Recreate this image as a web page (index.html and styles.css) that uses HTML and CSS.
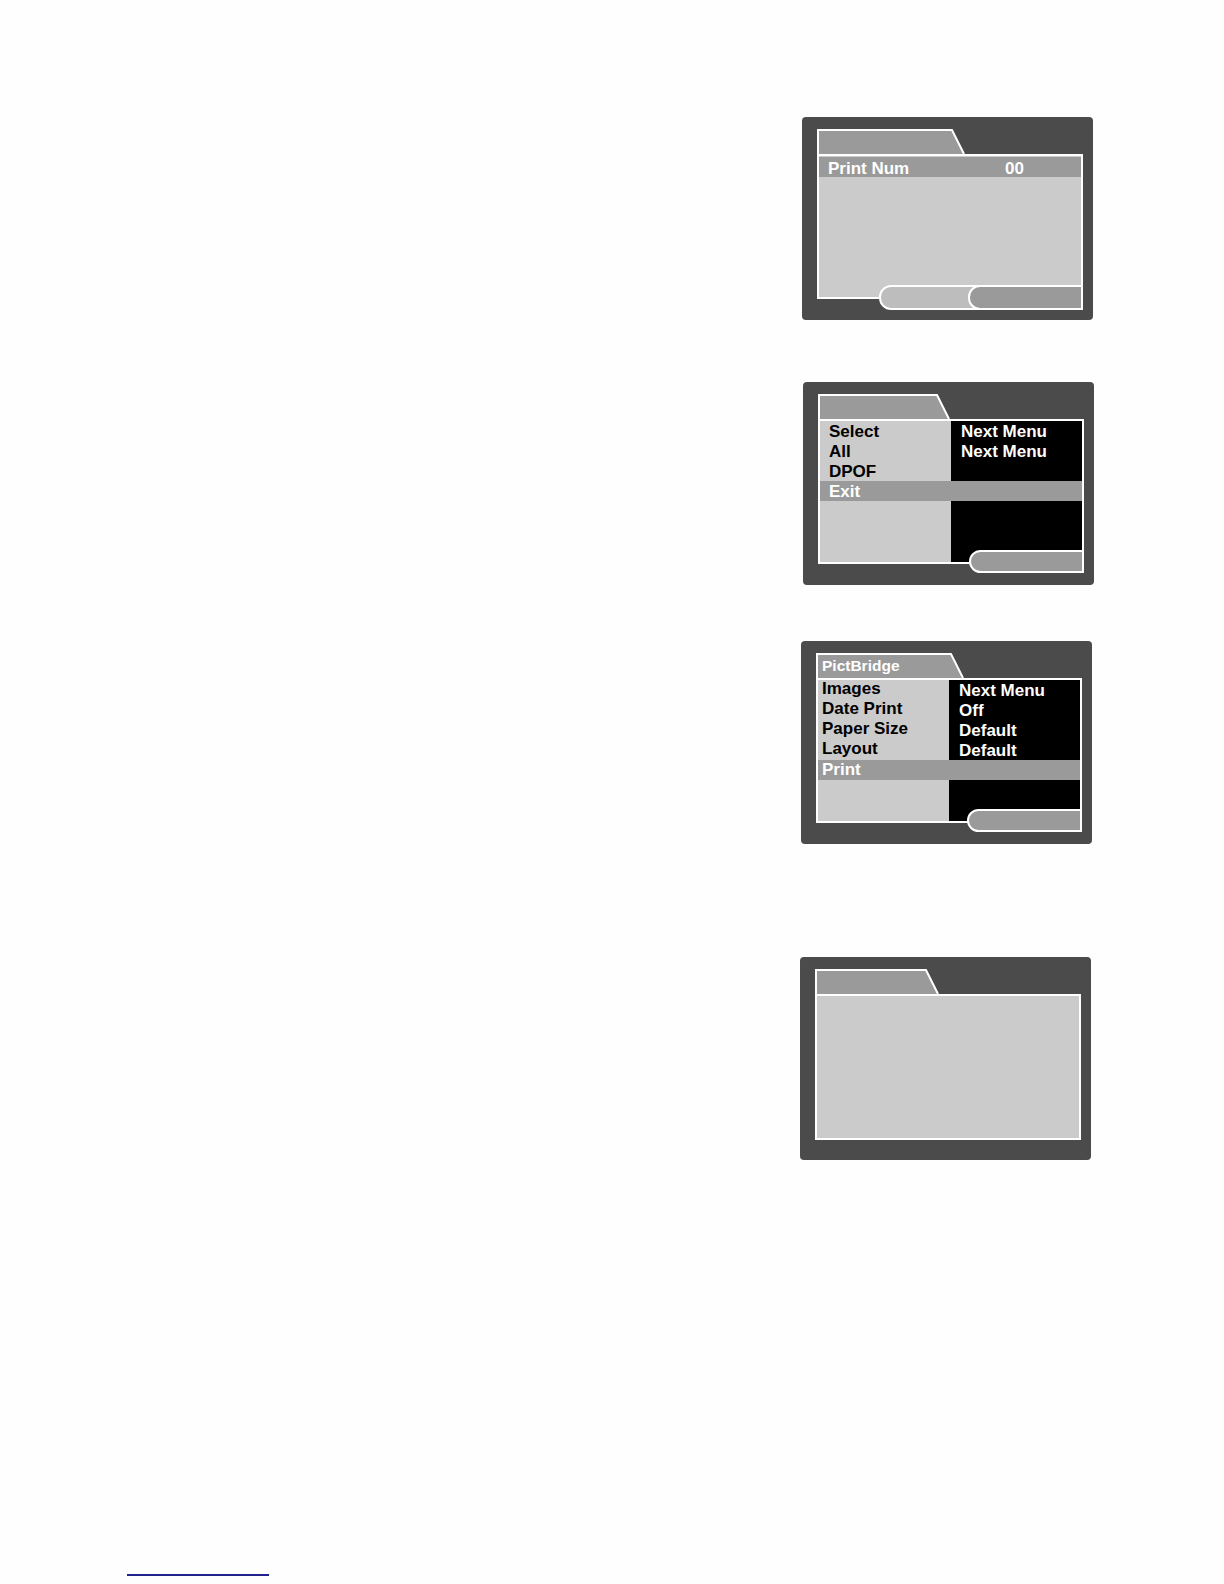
FILE: index.html
```html
<!DOCTYPE html>
<html lang="en">
<head>
<meta charset="utf-8">
<title>PictBridge menus</title>
<link rel="stylesheet" href="styles.css">
</head>
<body>
<div class="page">

  <div class="screen s1">
    <div class="tab tab-135">
      <svg class="tab-shape" width="150" height="25" viewBox="0 0 150 25"><path d="M1 25 V1 H135 L147 25 Z" fill="#9a9a9a"/><path d="M1 25 V1 H135 L147 25" fill="none" stroke="#fff" stroke-width="2"/></svg>
    </div>
    <div class="lcd lcd-plain">
      <div class="numrow"><span>Print Num</span><span>00</span></div>
      <div class="pill pill-light"></div>
      <div class="pill pill-main pill-tall"></div>
    </div>
  </div>

  <div class="screen s2">
    <div class="tab tab-119">
      <svg class="tab-shape" width="134" height="25" viewBox="0 0 134 25"><path d="M1 25 V1 H119 L131 25 Z" fill="#9a9a9a"/><path d="M1 25 V1 H119 L131 25" fill="none" stroke="#fff" stroke-width="2"/></svg>
    </div>
    <div class="lcd menu menu-wide">
      <div class="cell-l">Select</div><div class="cell-r">Next Menu</div>
      <div class="cell-l">All</div><div class="cell-r">Next Menu</div>
      <div class="cell-l">DPOF</div><div class="cell-r"></div>
      <div class="row-hi">Exit</div>
      <div class="pill pill-main"></div>
    </div>
  </div>

  <div class="screen s3">
    <div class="tab tab-135">
      <svg class="tab-shape" width="150" height="25" viewBox="0 0 150 25"><path d="M1 25 V1 H135 L147 25 Z" fill="#9a9a9a"/><path d="M1 25 V1 H135 L147 25" fill="none" stroke="#fff" stroke-width="2"/></svg>
      <span class="tab-label">PictBridge</span>
    </div>
    <div class="lcd menu menu-tight">
      <div class="cell-l">Images</div><div class="cell-r">Next Menu</div>
      <div class="cell-l">Date Print</div><div class="cell-r">Off</div>
      <div class="cell-l">Paper Size</div><div class="cell-r">Default</div>
      <div class="cell-l">Layout</div><div class="cell-r">Default</div>
      <div class="row-hi">Print</div>
      <div class="pill pill-main"></div>
    </div>
  </div>

  <div class="screen s4">
    <div class="tab tab-111">
      <svg class="tab-shape" width="126" height="25" viewBox="0 0 126 25"><path d="M1 25 V1 H111 L123 25 Z" fill="#9a9a9a"/><path d="M1 25 V1 H111 L123 25" fill="none" stroke="#fff" stroke-width="2"/></svg>
    </div>
    <div class="lcd lcd-plain"></div>
  </div>

  <div class="footline"></div>
</div>
</body>
</html>
```

FILE: styles.css
```css
html, body {
  margin: 0;
  padding: 0;
  background: #fefefe;
}

body {
  font-family: "Liberation Sans", Arial, sans-serif;
}

.page {
  display: flex;
  flex-direction: column;
  align-items: flex-start;
  padding-top: 117px;
  height: 1584px;
  box-sizing: border-box;
}

.screen {
  width: 291px;
  box-sizing: border-box;
  padding: 12px 10px 0 15px;
  background: #4b4b4b;
  border-radius: 4px;
  display: flex;
  flex-direction: column;
}

.s1 { margin-left: 802px; height: 203px; }
.s2 { margin-left: 803px; margin-top: 62px; height: 203px; }
.s3 { margin-left: 801px; margin-top: 56px; height: 203px; }
.s4 { margin-left: 800px; margin-top: 113px; height: 203px; }

.tab {
  position: relative;
  height: 25px;
}

.tab-135 { width: 150px; }
.tab-119 { width: 134px; }
.tab-111 { width: 126px; }

.tab-shape {
  position: absolute;
  left: 0;
  top: 0;
  display: block;
}

.tab-label {
  position: relative;
  display: block;
  padding: 1px 0 0 6px;
  line-height: 23px;
  color: #fff;
  font-weight: bold;
  font-size: 15.5px;
}

.lcd {
  position: relative;
  box-sizing: border-box;
  height: 145px;
  border: 2px solid #fff;
  background: #cbcbcb;
}

.s4 .lcd { height: 146px; }

.numrow {
  display: grid;
  grid-template-columns: 177px 1fr;
  box-sizing: border-box;
  padding: 2px 0 0 9px;
  margin-top: 1px;
  height: 20px;
  line-height: 19px;
  background: #9a9a9a;
  color: #fff;
  font-weight: bold;
  font-size: 17px;
}

.menu {
  display: grid;
  grid-template-columns: 131px 1fr;
  grid-auto-rows: 20px;
  align-content: start;
  background: linear-gradient(to right, #cbcbcb 131px, #000 131px);
  font-weight: bold;
  font-size: 17px;
  line-height: 20px;
}

.cell-l {
  color: #000;
  white-space: nowrap;
}

.cell-r {
  color: #fff;
  padding-left: 10px;
  white-space: nowrap;
}

.menu-wide .cell-l,
.menu-wide .row-hi { padding-left: 9px; }

.menu-wide .cell-l,
.menu-wide .cell-r,
.menu-wide .row-hi { padding-top: 1px; line-height: 19px; }

.menu-tight .cell-l,
.menu-tight .row-hi { padding-left: 4px; }

.menu-tight .cell-l { line-height: 18px; }

.menu-tight .cell-r { padding-top: 2px; line-height: 18px; }

.row-hi {
  grid-column: 1 / -1;
  background: #9a9a9a;
  color: #fff;
}

.pill {
  position: absolute;
  box-sizing: border-box;
  top: 129px;
  height: 23px;
  border: 2px solid #fff;
  border-radius: 12px 0 0 12px;
  background: #9a9a9a;
}

.pill-main {
  left: 149px;
  right: -2px;
}

.pill-tall {
  top: 129px;
  height: 25px;
}

.pill-light {
  left: 60px;
  width: 112px;
  top: 129px;
  height: 25px;
  background: #bdbdbd;
}

.footline {
  margin-left: 127px;
  margin-top: 414px;
  width: 142px;
  height: 2px;
  background: #22228c;
}
```
